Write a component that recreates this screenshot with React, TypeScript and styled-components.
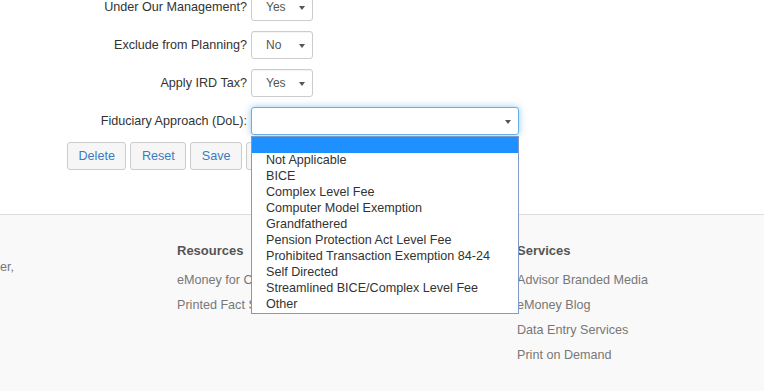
import React from 'react'
import styled, { createGlobalStyle } from 'styled-components'

const GlobalStyle = createGlobalStyle`
body {
  margin: 0;
  font-family: "Liberation Sans", Arial, sans-serif;
  background: #fff;
  overflow: hidden;
}
`

const Page = styled.div`
width: 764px;
height: 391px;
overflow: hidden;
display: flex;
flex-direction: column;
`

const Main = styled.div`
padding-bottom: 44px;
border-bottom: 1px solid #ddd;
`

const FormGrid = styled.div`
margin-top: -7px;
display: grid;
grid-template-columns: 247px auto;
column-gap: 4px;
row-gap: 10px;
align-items: center;
`

const Label = styled.label`
text-align: right;
font-size: 12.6px;
color: #333;
`

const SelectWrap = styled.div`
position: relative;
`

const SelectBox = styled.div<{ $width: number; $focused?: boolean }>`
box-sizing: border-box;
width: ${p => p.$width}px;
height: 28px;
display: flex;
align-items: center;
justify-content: space-between;
padding: 0 7px 0 14px;
font-size: 12px;
color: #555;
background: #fff;
border: 1px solid ${p => (p.$focused ? '#66afe9' : '#ccc')};
border-radius: 3px;
box-shadow: ${p => (p.$focused ? '0 0 7px rgba(102,175,233,.7)' : 'inset 0 1px 1px rgba(0,0,0,.05)')};
`

const Caret = styled.span`
width: 0;
height: 0;
margin-top: 2px;
border-left: 3px solid transparent;
border-right: 3px solid transparent;
border-top: 4px solid #555;
`

const OptionList = styled.ul`
position: absolute;
top: calc(100% + 1px);
left: 0;
z-index: 5;
box-sizing: border-box;
width: 268px;
height: 178px;
margin: 0;
padding: 0;
list-style: none;
background: #fff;
border: 1px solid #7f9ac9;
`

const Option = styled.li<{ $active?: boolean }>`
height: 16px;
line-height: 14px;
padding-left: 14px;
font-size: 12.6px;
color: #333;
background: ${p => (p.$active ? '#1e90ff' : 'transparent')};
`

const ButtonRow = styled.div`
display: flex;
gap: 4px;
margin: 7px 0 0 67px;
`

const Button = styled.button`
box-sizing: border-box;
height: 28px;
padding: 0 10.5px;
font-family: inherit;
font-size: 12.6px;
color: #3a7cc4;
background: #f6f6f6;
border: 1px solid #ccc;
border-radius: 3px;
`

const Footer = styled.footer`
flex: 1;
background: #f9f9f9;
padding-top: 26px;
`

const FooterGrid = styled.div`
display: grid;
grid-template-columns: 177px 170px 170px 1fr;
font-size: 12.6px;
color: #777;
`

const Col = styled.div`
display: flex;
flex-direction: column;
`

const Blurb = styled.p`
margin: 16px 0 0;
line-height: 20px;
`

const Heading = styled.h4`
margin: 0 0 9px;
font-size: 13px;
font-weight: bold;
line-height: 20px;
color: #555;
`

const Link = styled.a`
line-height: 20px;
margin-bottom: 5px;
color: #777;
text-decoration: none;
`

const fiduciaryOptions = [
  '',
  'Not Applicable',
  'BICE',
  'Complex Level Fee',
  'Computer Model Exemption',
  'Grandfathered',
  'Pension Protection Act Level Fee',
  'Prohibited Transaction Exemption 84-24',
  'Self Directed',
  'Streamlined BICE/Complex Level Fee',
  'Other',
]

const yesNoRows = [
  { label: 'Under Our Management?', value: 'Yes' },
  { label: 'Exclude from Planning?', value: 'No' },
  { label: 'Apply IRD Tax?', value: 'Yes' },
]

const App = () => {
  return (
    <Page>
      <GlobalStyle />
      <Main>
        <FormGrid>
          {yesNoRows.map(row => (
            <React.Fragment key={row.label}>
              <Label>{row.label}</Label>
              <SelectWrap>
                <SelectBox $width={62}>
                  {row.value}
                  <Caret />
                </SelectBox>
              </SelectWrap>
            </React.Fragment>
          ))}
          <Label>Fiduciary Approach (DoL):</Label>
          <SelectWrap>
            <SelectBox $width={268} $focused>
              <span />
              <Caret />
            </SelectBox>
            <OptionList>
              {fiduciaryOptions.map((opt, i) => (
                <Option key={i} $active={i === 0}>{opt}</Option>
              ))}
            </OptionList>
          </SelectWrap>
        </FormGrid>
        <ButtonRow>
          <Button>Delete</Button>
          <Button>Reset</Button>
          <Button>Save</Button>
          <Button>Cancel</Button>
        </ButtonRow>
      </Main>
      <Footer>
        <FooterGrid>
          <Col>
            <Blurb>er,</Blurb>
          </Col>
          <Col>
            <Heading>Resources</Heading>
            <Link>eMoney for Clients</Link>
            <Link>Printed Fact Sheets</Link>
          </Col>
          <Col />
          <Col>
            <Heading>Services</Heading>
            <Link>Advisor Branded Media</Link>
            <Link>eMoney Blog</Link>
            <Link>Data Entry Services</Link>
            <Link>Print on Demand</Link>
          </Col>
        </FooterGrid>
      </Footer>
    </Page>
  )
}

export default App
